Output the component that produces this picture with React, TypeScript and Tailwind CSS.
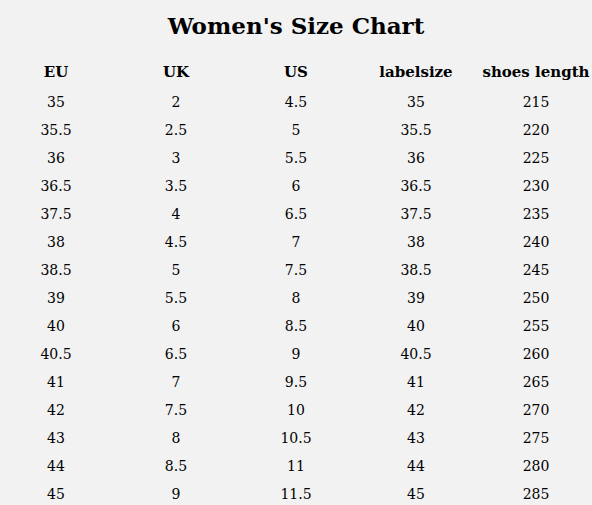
import React from "react";

const rows: [string, string, string, string, string][] = [
  ["35", "2", "4.5", "35", "215"],
  ["35.5", "2.5", "5", "35.5", "220"],
  ["36", "3", "5.5", "36", "225"],
  ["36.5", "3.5", "6", "36.5", "230"],
  ["37.5", "4", "6.5", "37.5", "235"],
  ["38", "4.5", "7", "38", "240"],
  ["38.5", "5", "7.5", "38.5", "245"],
  ["39", "5.5", "8", "39", "250"],
  ["40", "6", "8.5", "40", "255"],
  ["40.5", "6.5", "9", "40.5", "260"],
  ["41", "7", "9.5", "41", "265"],
  ["42", "7.5", "10", "42", "270"],
  ["43", "8", "10.5", "43", "275"],
  ["44", "8.5", "11", "44", "280"],
  ["45", "9", "11.5", "45", "285"],
];

const headers = ["EU", "UK", "US", "labelsize", "shoes length"];

export default function App() {
  return (
    <div
      className="w-[592px] h-[505px] bg-[#f2f2f2] text-black overflow-hidden"
      style={{ fontFamily: '"DejaVu Serif", "Liberation Serif", serif' }}
    >
      <h1 className="text-center font-bold text-[23px] leading-[28px] pt-[12px] h-[56px]">
        Women's Size Chart
      </h1>
      <div className="grid grid-cols-[repeat(5,120px)] -ml-1">
        {headers.map((h) => (
          <div key={h} className="text-center font-bold text-[15px] leading-[32px] h-[32px]">
            {h}
          </div>
        ))}
        {rows.map((r, i) =>
          r.map((c, j) => (
            <div
              key={i + "-" + j}
              className="text-center text-[14px] leading-[28px] h-[28px]"
            >
              {c}
            </div>
          ))
        )}
      </div>
    </div>
  );
}
